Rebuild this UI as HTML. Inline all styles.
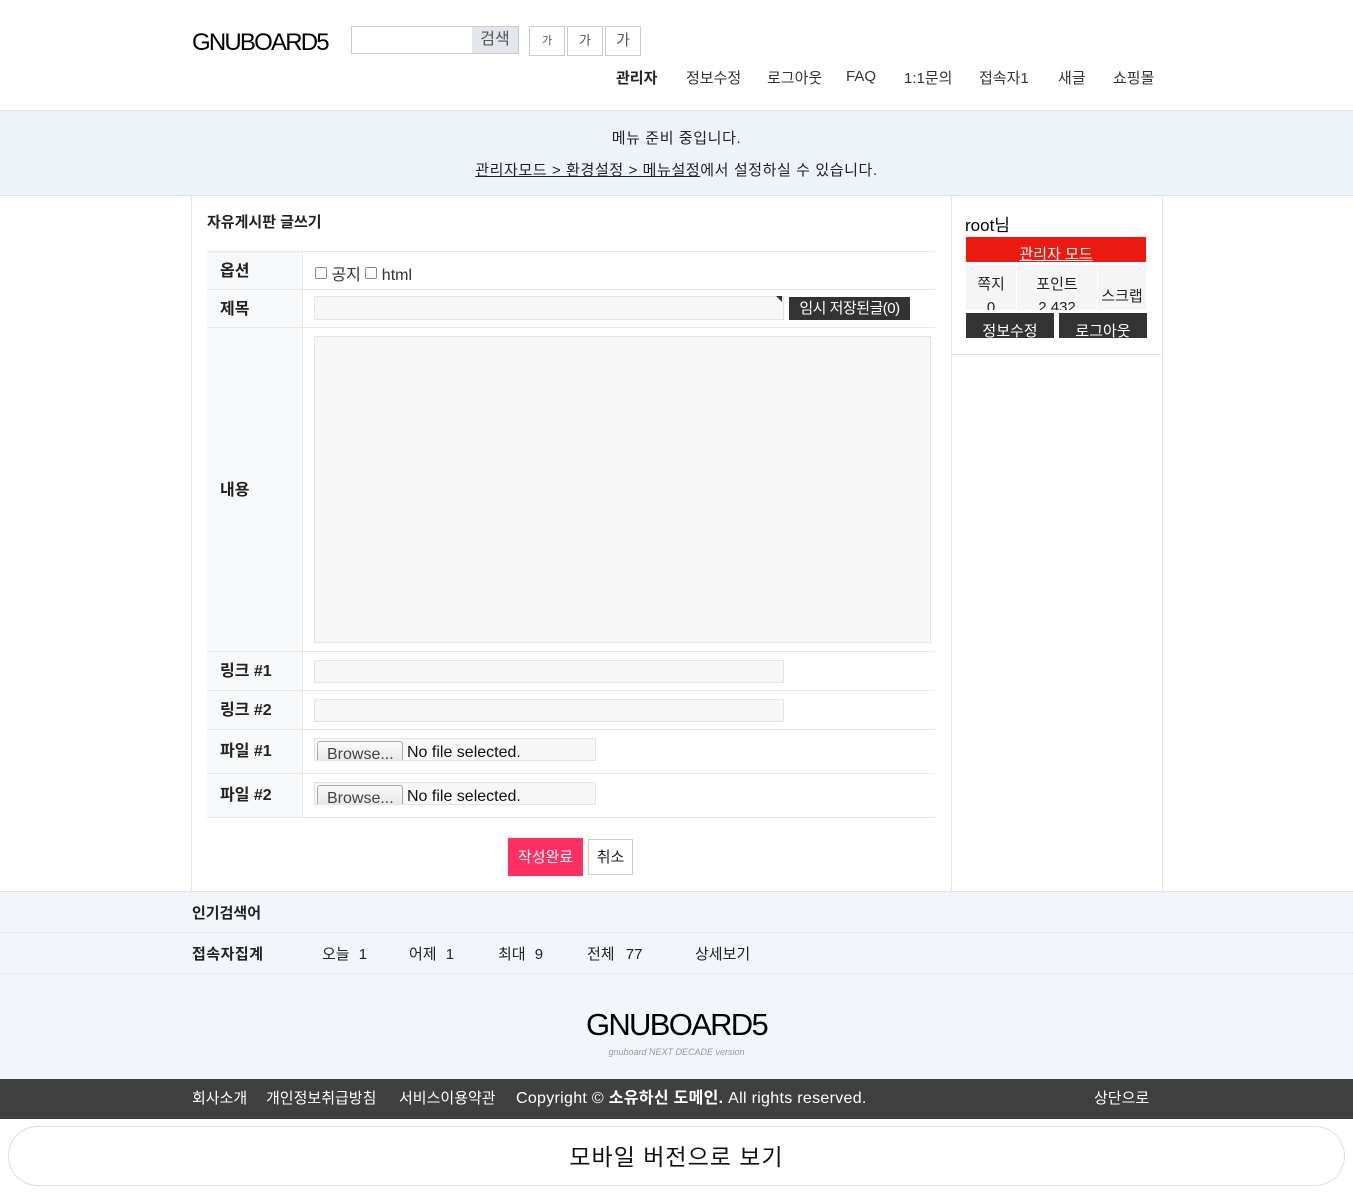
<!DOCTYPE html>
<html><head><meta charset="utf-8"><style>
*{box-sizing:border-box;margin:0;padding:0}
body{width:1353px;height:1194px;position:relative;font-family:"Liberation Sans","Noto Sans CJK KR",sans-serif;font-size:15px;color:#222;background:#fff;overflow:hidden}
.a{position:absolute}
.nav span{position:absolute;top:67px;font-size:15px;color:#333}
.th{position:absolute;left:207px;width:96px;background:#f7f8f9;font-weight:bold;padding-left:13px;font-size:16px;border-right:1px solid #e8e8e8}
.row{position:absolute;left:207px;width:728px;border-top:1px solid #e8e8e8}
.inp{position:absolute;background:#f7f7f7;border:1px solid #e4e4e4}
.file{position:absolute;left:314px;width:282px;height:23px;background:#f7f7f7;border:1px solid #e4e4e4;overflow:hidden;font-size:16px}
.file b{font-weight:normal;position:absolute;left:2px;top:2px;width:86px;height:24px;border:1px solid #aaa;border-radius:3px;background:linear-gradient(#fafafa,#e5e5e5);color:#444;padding-left:9px;line-height:26px}
.file i{font-style:normal;position:absolute;left:92px;top:5px;color:#111}
</style></head><body>
<div class="a" style="left:192px;top:29px;font-size:24px;letter-spacing:-1.8px;color:#000">GNUBOARD5</div>
<div class="a" style="left:351px;top:26px;width:168px;height:28px;border:1px solid #c8ccd2"></div>
<div class="a" style="left:472px;top:27px;width:46px;height:26px;background:#e3e6ea;color:#555;font-size:16px;text-align:center;line-height:26px">검색</div>
<div class="a" style="left:529px;top:26px;width:36px;height:30px;border:1px solid #ccc;font-size:11px;text-align:center;line-height:28px;color:#555">가</div>
<div class="a" style="left:567px;top:26px;width:36px;height:30px;border:1px solid #ccc;font-size:13px;text-align:center;line-height:28px;color:#555">가</div>
<div class="a" style="left:605px;top:26px;width:36px;height:30px;border:1px solid #ccc;font-size:15px;text-align:center;line-height:28px;color:#555">가</div>
<div class="nav">
<span style="left:616px;font-weight:bold;color:#222">관리자</span><span style="left:686px">정보수정</span><span style="left:767px">로그아웃</span><span style="left:846px;top:68px">FAQ</span><span style="left:904px">1:1문의</span><span style="left:979px">접속자1</span><span style="left:1058px">새글</span><span style="left:1113px">쇼핑몰</span></div>
<div class="a" style="left:0;top:110px;width:1353px;height:86px;background:#eef3f9;border-top:1px solid #e2e6ec;border-bottom:1px solid #dde3ea;text-align:center;font-size:15px;color:#222;letter-spacing:0.6px">
<div style="margin-top:16px">메뉴 준비 중입니다.</div>
<div style="margin-top:11px"><u>관리자모드 &gt; 환경설정 &gt; 메뉴설정</u>에서 설정하실 수 있습니다.</div></div>
<div class="a" style="left:191px;top:196px;width:1px;height:695px;background:#e2e6ec"></div>
<div class="a" style="left:951px;top:196px;width:1px;height:695px;background:#e2e6ec"></div>
<div class="a" style="left:1162px;top:196px;width:1px;height:695px;background:#e2e6ec"></div>
<div class="a" style="left:207px;top:211px;font-weight:bold;font-size:15px">자유게시판 글쓰기</div>
<div class="row" style="top:251px;height:567px;border-bottom:1px solid #e8e8e8"></div>
<div class="th" style="top:252px;height:37px;line-height:39px">옵션</div>
<div class="row" style="top:289px"></div>
<div class="th" style="top:290px;height:37px;line-height:39px">제목</div>
<div class="row" style="top:327px"></div>
<div class="th" style="top:328px;height:323px;line-height:325px">내용</div>
<div class="row" style="top:651px"></div>
<div class="th" style="top:652px;height:38px;line-height:40px">링크 #1</div>
<div class="row" style="top:690px"></div>
<div class="th" style="top:691px;height:38px;line-height:40px">링크 #2</div>
<div class="row" style="top:729px"></div>
<div class="th" style="top:730px;height:43px;line-height:43px">파일 #1</div>
<div class="row" style="top:773px"></div>
<div class="th" style="top:774px;height:43px;line-height:43px">파일 #2</div>
<div class="a" style="left:315px;top:261px;font-size:16px;color:#333"><span style="display:inline-block;width:12px;height:12px;border:1px solid #888;border-radius:2px;vertical-align:1px"></span> 공지 <span style="display:inline-block;width:12px;height:12px;border:1px solid #888;border-radius:2px;vertical-align:1px"></span> html</div>
<div class="inp" style="left:314px;top:296px;width:470px;height:24px"></div>
<div class="a" style="left:776px;top:296px;width:0;height:0;border-top:6px solid #333;border-left:6px solid transparent"></div>
<div class="a" style="left:789px;top:297px;width:121px;height:23px;background:#333;color:#fff;font-size:15px;text-align:center;line-height:23px;letter-spacing:-0.5px">임시 저장된글(0)</div>
<div class="inp" style="left:314px;top:336px;width:617px;height:307px"></div>
<div class="inp" style="left:314px;top:660px;width:470px;height:23px"></div>
<div class="inp" style="left:314px;top:699px;width:470px;height:23px"></div>
<div class="file" style="top:738px"><b>Browse...</b><i>No file selected.</i></div>
<div class="file" style="top:782px"><b>Browse...</b><i>No file selected.</i></div>
<div class="a" style="left:508px;top:838px;width:75px;height:38px;background:#ff3061;color:#fff;font-size:15px;text-align:center;line-height:40px">작성완료</div>
<div class="a" style="left:588px;top:839px;width:45px;height:36px;border:1px solid #ccc;font-size:15px;text-align:center;line-height:36px">취소</div>
<div class="a" style="left:965px;top:211px;font-size:17px;color:#000">root님</div>
<div class="a" style="left:966px;top:237px;width:180px;height:25px;background:#eb1a10;color:#fff;text-align:center;font-size:15px;line-height:36px;overflow:hidden"><u>관리자 모드</u></div>
<div class="a" style="left:966px;top:265px;width:180px;height:45px;background:#f5f5f5;font-size:15px;overflow:hidden">
<div class="a" style="left:0;width:50px;text-align:center;top:8px;line-height:23px">쪽지<br>0</div>
<div class="a" style="left:50px;width:1px;height:45px;background:#fff"></div>
<div class="a" style="left:51px;width:80px;text-align:center;top:8px;line-height:23px">포인트<br>2,432</div>
<div class="a" style="left:131px;width:1px;height:45px;background:#fff"></div>
<div class="a" style="left:132px;width:48px;text-align:center;top:20px">스크랩</div></div>
<div class="a" style="left:966px;top:313px;width:88px;height:25px;background:#333;color:#fff;text-align:center;line-height:38px;overflow:hidden">정보수정</div>
<div class="a" style="left:1059px;top:313px;width:88px;height:25px;background:#333;color:#fff;text-align:center;line-height:38px;overflow:hidden">로그아웃</div>
<div class="a" style="left:952px;top:354px;width:210px;height:1px;background:#e2e6ec"></div>
<div class="a" style="left:0;top:891px;width:1353px;height:188px;background:#f2f5fa;border-top:1px solid #e0e4ea"></div>
<div class="a" style="left:192px;top:902px;font-weight:bold;font-size:15px">인기검색어</div>
<div class="a" style="left:0;top:932px;width:1353px;border-top:1px dotted #dde1e6"></div>
<div class="a" style="left:192px;top:943px;font-weight:bold;font-size:15px;letter-spacing:0.5px">접속자집계</div>
<div class="a" style="left:322px;top:943px;font-size:15px;word-spacing:5px">오늘 1</div>
<div class="a" style="left:409px;top:943px;font-size:15px;word-spacing:5px">어제 1</div>
<div class="a" style="left:498px;top:943px;font-size:15px;word-spacing:5px">최대 9</div>
<div class="a" style="left:587px;top:943px;font-size:15px;word-spacing:7px">전체 77</div>
<div class="a" style="left:695px;top:943px;font-size:15px">상세보기</div>
<div class="a" style="left:0;top:973px;width:1353px;border-top:1px dotted #dde1e6"></div>
<div class="a" style="left:0;top:1007px;width:1353px;text-align:center;font-size:31px;letter-spacing:-1.7px;color:#000">GNUBOARD5</div>
<div class="a" style="left:0;top:1047px;width:1353px;text-align:center;font-size:9px;color:#999;font-style:italic">gnuboard NEXT DECADE version</div>
<div class="a" style="left:0;top:1079px;width:1353px;height:40px;background:#404040;color:#fff;font-size:15px;line-height:40px">
<span class="a" style="left:192px">회사소개</span><span class="a" style="left:266px">개인정보취급방침</span><span class="a" style="left:399px">서비스이용약관</span><span class="a" style="left:516px;letter-spacing:0.3px;font-size:16px">Copyright © <b>소유하신 도메인.</b> All rights reserved.</span><span class="a" style="left:1094px">상단으로</span></div>
<div class="a" style="left:8px;top:1126px;width:1337px;height:60px;border:1px solid #ddd;border-radius:30px;text-align:center;line-height:60px;font-size:23px;color:#111;letter-spacing:1px">모바일 버전으로 보기</div>
</body></html>
